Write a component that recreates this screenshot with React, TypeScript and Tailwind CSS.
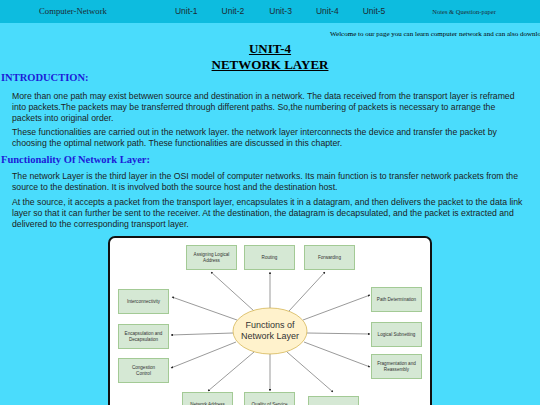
import React from 'react'

type Node = { label: string[]; x: number; y: number }

// page coordinates of the diagram's inner (padding) box
const OX = 110
const OY = 238

const nodes: Node[] = [
  { label: ['Assigning Logical', 'Address'], x: 186, y: 245 },
  { label: ['Routing'], x: 244, y: 245 },
  { label: ['Forwarding'], x: 304, y: 245 },
  { label: ['Interconnectivity'], x: 118, y: 289 },
  { label: ['Path Determination'], x: 371, y: 287 },
  { label: ['Encapsulation and', 'Decapsulation'], x: 118, y: 324 },
  { label: ['Logical Subnetting'], x: 371, y: 322 },
  { label: ['Congestion', 'Control'], x: 118, y: 358 },
  { label: ['Fragmentation and', 'Reassembly'], x: 371, y: 354 },
  { label: ['Network Address'], x: 182, y: 392 },
  { label: ['Quality of Service'], x: 244, y: 392 },
  { label: ['Error Handling'], x: 308, y: 396 },
]

// [x1, y1, x2, y2] in page coordinates, arrow at the second point
const edges: number[][] = [
  [254, 311, 211, 272],
  [270, 308, 270, 272],
  [289, 311, 325, 272],
  [237, 320, 172, 297],
  [303, 320, 370, 295],
  [233, 333, 171, 335],
  [307, 333, 370, 334],
  [236, 342, 171, 368],
  [304, 342, 370, 367],
  [254, 352, 208, 391],
  [270, 354, 270, 391],
  [287, 352, 333, 392],
]

function Diagram() {
  return (
    <div className="relative ml-[108px] w-[324px] h-[180px] bg-white border-2 border-[#111] rounded-[7px]">
      <svg className="absolute inset-0" width="320" height="176" viewBox="0 0 320 176">
        <defs>
          <marker id="arr" markerWidth="4" markerHeight="4" refX="3.5" refY="2" orient="auto">
            <path d="M0,0 L4,2 L0,4 Z" fill="#222" />
          </marker>
        </defs>
        {edges.map((e, i) => (
          <line
            key={i}
            x1={e[0] - OX}
            y1={e[1] - OY}
            x2={e[2] - OX}
            y2={e[3] - OY}
            stroke="#555"
            strokeWidth="0.6"
            markerEnd="url(#arr)"
          />
        ))}
        <ellipse cx={270 - OX} cy={331 - OY} rx="37" ry="23" fill="#fff2cc" stroke="#d6b656" strokeWidth="0.8" />
      </svg>
      {nodes.map((n) => (
        <div
          key={n.label.join(' ')}
          className="absolute flex flex-col items-center justify-center w-[51px] h-[25px] bg-[#d5e8d4] border border-[#a3ca95] text-[4.6px] leading-[6px] text-[#333] text-center"
          style={{ left: n.x - OX, top: n.y - OY }}
        >
          {n.label.map((l) => (
            <span key={l}>{l}</span>
          ))}
        </div>
      ))}
      <div
        className="absolute w-[74px] flex flex-col items-center text-[9px] leading-[11px] text-[#333]"
        style={{ left: 233 - OX, top: 320 - OY }}
      >
        <span>Functions of</span>
        <span>Network Layer</span>
      </div>
    </div>
  )
}

export default function App() {
  const serif = "font-['Liberation_Serif',serif]"
  return (
    <div className="w-[540px] h-[405px] overflow-hidden bg-[#4adcfc] font-['Liberation_Sans',Arial,sans-serif] text-[#1c1c1c]">
      <nav className="h-[23px] bg-[#0dbcdf] flex items-center text-[#1d2b33]">
        <span className={`${serif} text-[8.7px] ml-[39px]`}>Computer-Network</span>
        <span className="text-[8.5px] ml-[68px]">Unit-1</span>
        <span className="text-[8.5px] ml-[24px]">Unit-2</span>
        <span className="text-[8.5px] ml-[25px]">Unit-3</span>
        <span className="text-[8.5px] ml-[24px]">Unit-4</span>
        <span className="text-[8.5px] ml-[24px]">Unit-5</span>
        <span className={`${serif} text-[6.5px] ml-[47px]`}>Notes &amp; Question-paper</span>
      </nav>

      <div className={`${serif} h-[10px] mt-[6px] leading-[10px] text-[7px] whitespace-nowrap overflow-hidden pl-[330px] text-black`}>
        Welcome to our page you can learn computer network and can also download notes and question papers
      </div>

      <h1 className={`${serif} text-center font-bold text-[13px] leading-[16px] underline text-black mt-[2px]`}>
        UNIT-4
        <br />
        NETWORK LAYER
      </h1>

      <h2 className={`${serif} font-bold text-[10.5px] leading-[13px] text-[#1c1cd8] ml-[1px] -mt-[2px]`}>
        INTRODUCTION:
      </h2>
      <div className="pl-[12px] pr-[15px] text-[8.7px] leading-[11px]">
        <p className="mt-[7px]">
          More than one path may exist betwwen source and destination in a network. The data received from the transport layer is reframed
          into packets.The packets may be transferred through different paths. So,the numbering of packets is necessary to arrange the
          packets into original order.
        </p>
        <p className="mt-[3px]">
          These functionalities are carried out in the network layer. the network layer interconnects the device and transfer the packet by
          choosing the optimal network path. These functionalities are discussed in this chapter.
        </p>
      </div>

      <h2 className={`${serif} font-bold text-[10.5px] leading-[13px] text-[#1c1cd8] ml-[1px] mt-[4px]`}>
        Functionality Of Network Layer:
      </h2>
      <div className="pl-[12px] pr-[15px] text-[8.7px] leading-[11px]">
        <p className="mt-[5px]">
          The network Layer is the third layer in the OSI model of computer networks. Its main function is to transfer network packets from the
          source to the destination. It is involved both the source host and the destination host.
        </p>
        <p className="mt-[4px]">
          At the source, it accepts a packet from the transport layer, encapsulates it in a datagram, and then delivers the packet to the data link
          layer so that it can further be sent to the receiver. At the destination, the datagram is decapsulated, and the packet is extracted and
          delivered to the corresponding transport layer.
        </p>
      </div>

      <div className="mt-[6px]">
        <Diagram />
      </div>
    </div>
  )
}
